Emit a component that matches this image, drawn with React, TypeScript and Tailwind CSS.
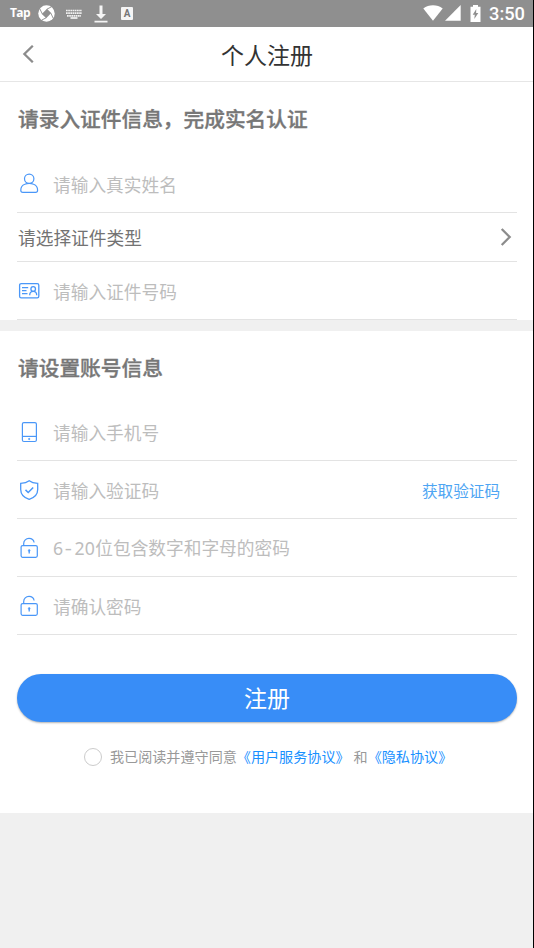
import type { ReactNode } from 'react'

function UserIcon() {
  return (
    <svg width="24" height="24" viewBox="0 0 24 24" fill="none" stroke="#4a97f8" strokeWidth="1.2">
      <circle cx="12.2" cy="6.8" r="4.7" />
      <path d="M7.8 12.3c-2.200.8-4 3-4 6 0 1.400.7 2.100 2 2.100h12.800c1.300 0 2-.7 2-2.100 0-3-1.800-5.200-4-6-2.700-1.200-6.100-1.200-8.800 0z" />
    </svg>
  )
}

function CardIcon() {
  return (
    <svg width="24" height="24" viewBox="0 0 24 24" fill="none" stroke="#4a97f8" strokeWidth="1.3">
      <rect x="2.600" y="4.600" width="19.200" height="14.200" rx="1.600" />
      <path d="M5 8.600h6.200M5 11.600h4.500M5 14.600h5.500" />
      <circle cx="16.200" cy="10" r="2.300" />
      <path d="M12.700 16.200c0-2.300 1.500-3.900 3.500-3.900s3.500 1.600 3.500 3.900" />
    </svg>
  )
}

function PhoneIcon() {
  return (
    <svg width="24" height="24" viewBox="0 0 24 24" fill="none" stroke="#4a97f8" strokeWidth="1.2">
      <rect x="5.400" y="2.600" width="14" height="18.900" rx="1.500" />
      <path d="M5.400 16.400h14" />
      <circle cx="12.200" cy="19" r="0.700" fill="#4a97f8" strokeWidth="0.700" />
    </svg>
  )
}

function ShieldIcon() {
  return (
    <svg width="24" height="24" viewBox="0 0 24 24" fill="none" stroke="#4a97f8" strokeWidth="1.3">
      <path d="M12.200 2.700C10 4.400 6.500 5.200 3.700 5.400V11.500c0 4.900 4 8.400 8.500 9.900 4.500-1.500 8.500-5 8.500-9.900V5.400c-2.800-.2-6.300-1-8.500-2.700z" />
      <path d="M8.500 11.900l2.700 2.600 5-5" strokeWidth="1.500" />
    </svg>
  )
}

function LockIcon() {
  return (
    <svg width="24" height="24" viewBox="0 0 24 24" fill="none" stroke="#4a97f8" strokeWidth="1.2">
      <rect x="4.100" y="9.600" width="16.200" height="11.700" rx="1.500" />
      <path d="M6.700 9.300V7.600c0-3 2.300-5.200 5.300-5.200 2.700 0 4.700 1.700 5.100 4.100" />
      <circle cx="12.200" cy="14.500" r="0.900" fill="#4a97f8" strokeWidth="0.600" />
      <path d="M12.200 15v2.400" strokeWidth="1.300" />
    </svg>
  )
}

function Chevron({ className, direction }: { className: string; direction: 'left' | 'right' }) {
  return (
    <svg className={className} viewBox="0 0 12 18" fill="none" stroke="#8c8c8c" strokeWidth="2.3">
      <path d={direction === 'left' ? 'M10.800 .8L2.400 9l8.400 8.200' : 'M1.700 1L9.700 9l-8 8'} />
    </svg>
  )
}

function StatusBar() {
  return (
    <div className="flex h-[27px] items-center bg-[#8f8f8f] pr-[9px] pl-2.5 text-white">
      <span className="w-7 pb-0.5 font-['Open_Sans'] text-[12px] leading-none font-bold tracking-[-0.6px]">Tap</span>
      <svg className="w-[17px] shrink-0" viewBox="0 0 18 18">
        <circle cx="9" cy="9" r="8.700" fill="#fff" />
        <path d="M9.500 4L14 8.500 8.700 14 4 9.500z" fill="#8f8f8f" />
        <path d="M4.600 9.500L2 4.200M9.300 4.500l5-2.600M13.500 8.500l2.500 5.300M8.700 13.500l-5 2.600" stroke="#8f8f8f" strokeWidth="1" />
      </svg>
      <svg className="ml-[11px] w-4 shrink-0" viewBox="0 0 16 10" stroke="#f2f2f2" strokeWidth="1.700">
        <path d="M0 1.500h16M0 4.200h16M1 6.800h14" strokeDasharray="1.700 .5" />
        <path d="M4.500 9h7" />
      </svg>
      <svg className="ml-3 w-[14px] shrink-0" viewBox="0 0 14 18" fill="#f5f5f5">
        <path d="M5.500.5h3V9H12l-5 5-5-5h3.500zM.5 15.700h13v1.800H.5z" />
      </svg>
      <span className="ml-[13px] grid h-[13px] w-3 place-items-center rounded-[1px] bg-[#f5f5f5] font-['Roboto'] text-[10px] leading-none font-bold text-[#777]">
        A
      </span>
      <div className="ml-auto flex items-center">
        <svg className="w-5" viewBox="0 0 20 16" fill="#fff">
          <path d="M.3 3.600C5.800-.8 14.200-.8 19.700 3.600L10 15.700z" />
        </svg>
        <svg className="ml-0.5 w-4" viewBox="0 0 16 16" fill="#fff">
          <path d="M15.700 0v15.700H0z" />
        </svg>
        <svg className="ml-[9px] w-[11px]" viewBox="0 0 11 17">
          <path d="M3 0h5v1.700h2.500V17H.5V1.700H3z" fill="#fff" />
          <path d="M6.300 4L2.700 9.800h2.100L4.300 14l4-6H6.100z" fill="#8f8f8f" />
        </svg>
        <span className="ml-2 w-[35px] pt-px font-['Roboto'] text-[18.3px] leading-none font-medium whitespace-nowrap">3:50</span>
      </div>
    </div>
  )
}

function Field({ icon, children, action }: { icon: ReactNode; children: ReactNode; action?: string }) {
  return (
    <div className="flex h-[58px] items-center border-b border-[#e3e3e3]">
      {icon}
      <span className="ml-3 pt-0.5 text-[17.7px] text-[#bdbdbd]">{children}</span>
      {action && <button className="mr-[17px] ml-auto pt-0.5 text-[15.6px] text-[#4ea5f3]">{action}</button>}
    </div>
  )
}

export default function App() {
  return (
    <div className="flex h-[948px] w-[534px] flex-col border-r border-black bg-[#f0f0f0] font-['Noto_Sans_CJK_SC',sans-serif] leading-none">
      <StatusBar />
      <header className="grid h-[55px] grid-cols-[1fr_auto_1fr] items-center border-b border-[#e6e6e6] bg-white">
        <Chevron direction="left" className="ml-[22px] h-[18px] w-3" />
        <h1 className="pl-px text-[23px] text-[#333]">个人注册</h1>
      </header>

      <section className="bg-white pr-4 pl-[17px]">
        <h2 className="flex h-[73px] items-center pl-px text-[20.7px] font-medium text-[#777] [-webkit-text-stroke:0.35px_#777]">
          请录入证件信息，完成实名认证
        </h2>
        <Field icon={<UserIcon />}>请输入真实姓名</Field>
        <div className="flex h-[49px] items-center justify-between border-b border-[#e3e3e3] pr-[5px] pl-px text-[17.7px] text-[#737373]">
          <span className="pt-0.5">请选择证件类型</span>
          <Chevron direction="right" className="h-[18px] w-3" />
        </div>
        <Field icon={<CardIcon />}>请输入证件号码</Field>
      </section>

      <section className="mt-[11px] h-[482px] bg-white pr-4 pl-[17px]">
        <h2 className="flex h-[72px] items-center pl-px text-[20.7px] font-medium text-[#777] [-webkit-text-stroke:0.35px_#777]">
          请设置账号信息
        </h2>
        <Field icon={<PhoneIcon />}>请输入手机号</Field>
        <Field icon={<ShieldIcon />} action="获取验证码">
          请输入验证码
        </Field>
        <Field icon={<LockIcon />}>
          <span className="font-['Noto_Sans'] tracking-[0.3px]">
            6<span className="inline-block w-[11px] scale-x-125 text-center">-</span>20
          </span>
          位包含数字和字母的密码
        </Field>
        <Field icon={<LockIcon />}>请确认密码</Field>

        <button className="mt-[39px] h-12 w-full rounded-full bg-[#388df7] pb-0.5 text-[23px] text-white shadow-[0_1px_2px_rgba(0,0,0,0.3)]">
          注册
        </button>
        <div className="mt-[26px] flex items-center pl-[67px] text-[14.1px] whitespace-nowrap text-[#999]">
          <span className="mr-2 size-[18px] rounded-full border border-[#ccc]" />
          <div className="flex pb-0.5">
            <span>我已阅读并遵守同意</span>
            <a className="text-[#1890ff]">《用户服务协议》</a>
            <span className="ml-1">和</span>
            <a className="text-[#1890ff]">《隐私协议》</a>
          </div>
        </div>
      </section>
    </div>
  )
}
